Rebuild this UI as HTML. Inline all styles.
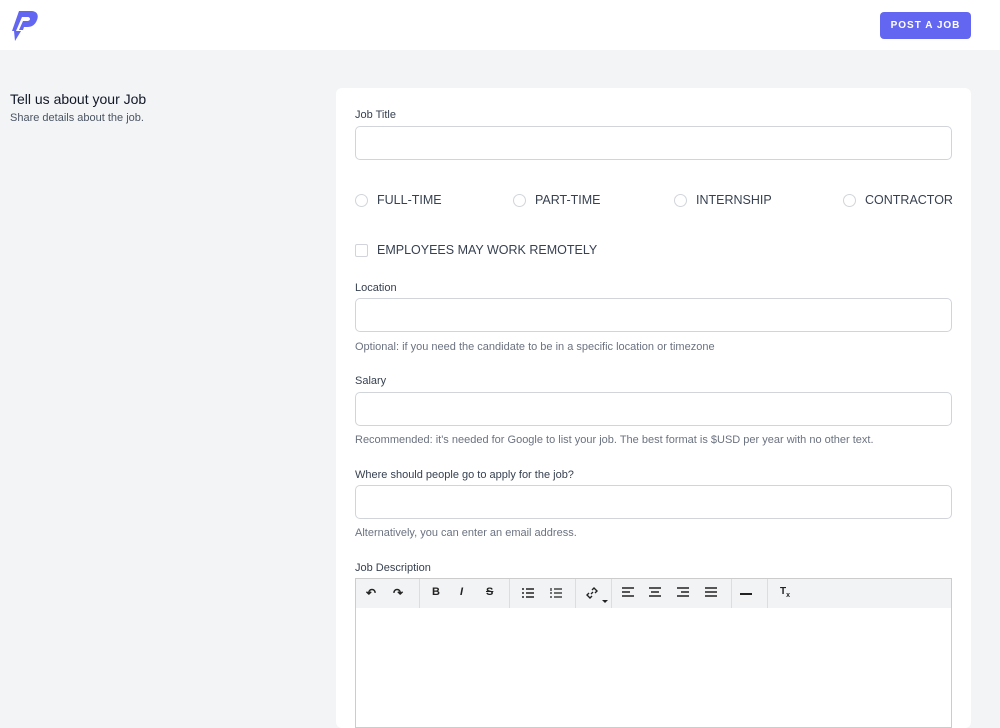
<!DOCTYPE html><html><head><style>
*{box-sizing:border-box;margin:0;padding:0}
body{width:1000px;height:717px;overflow:hidden;background:#f3f4f6;font-family:"Liberation Sans",sans-serif;color:#374151;position:relative}
.hdr{position:absolute;left:0;top:0;width:1000px;height:50px;background:#fff}
.btn{position:absolute;left:880px;top:12px;width:91px;height:27px;background:#6366f1;border-radius:4px;color:#fff;font-size:10px;font-weight:bold;letter-spacing:1px;text-align:center;line-height:27px}
.card{position:absolute;left:336px;top:88px;width:635px;height:640px;background:#fff;border-radius:6px}
.a{position:absolute;font-size:11px;color:#374151}
.in{position:absolute;left:355px;width:597px;height:34px;border:1px solid #d1d5db;border-radius:5px;background:#fff}
.help{position:absolute;left:355px;font-size:11px;color:#6b7280}
.r{position:absolute;font-size:12.5px;color:#374151}
.r i{position:absolute;left:0;top:1px;width:13px;height:13px;border:1px solid #d1d5db;border-radius:50%}
.tb{position:absolute;left:355px;top:578px;width:597px;height:31px;background:#f1f3f4;border:1px solid #ccc}
.ed{position:absolute;left:355px;top:608px;width:597px;height:120px;border:1px solid #ccc;border-top:none;background:#fff}
.sep{position:absolute;top:0;width:1px;height:29px;background:#ddd}
.ic{position:absolute;top:7px;font-size:12px;color:#222;font-weight:bold}
svg.s{position:absolute;top:8px}
</style></head><body>
<div class="hdr">
<svg style="position:absolute;left:12px;top:10px" width="27" height="32" viewBox="0 0 27 32"><path d="M7 1h12c6 0 8 4 6 9s-5 7-10 7h-3l-1 3h-4l4-9h4c2 0 3-1 3-2s-1-2-2-2h-6l-6 14H0z" fill="#6366f1"/><path d="M2 21h7l-6 10z" fill="#6366f1"/></svg>
<div class="btn">POST A JOB</div></div>
<div style="position:absolute;left:10px;top:91px;font-size:14px;color:#111827">Tell us about your Job</div>
<div style="position:absolute;left:10px;top:112px;font-size:11px;color:#4b5563">Share details about the job.</div>
<div class="card"></div>
<div class="a" style="left:355px;top:109px">Job Title</div>
<div class="in" style="top:126px"></div>
<div class="r" style="left:355px;top:193px"><i></i><span style="margin-left:22px">FULL-TIME</span></div>
<div class="r" style="left:513px;top:193px"><i></i><span style="margin-left:22px">PART-TIME</span></div>
<div class="r" style="left:674px;top:193px"><i></i><span style="margin-left:22px">INTERNSHIP</span></div>
<div class="r" style="left:843px;top:193px"><i></i><span style="margin-left:22px">CONTRACTOR</span></div>
<div class="r" style="left:355px;top:243px"><i style="border-radius:2px"></i><span style="margin-left:22px">EMPLOYEES MAY WORK REMOTELY</span></div>
<div class="a" style="left:355px;top:282px">Location</div>
<div class="in" style="top:298px"></div>
<div class="help" style="top:341px">Optional: if you need the candidate to be in a specific location or timezone</div>
<div class="a" style="left:355px;top:375px">Salary</div>
<div class="in" style="top:392px"></div>
<div class="help" style="top:434px">Recommended: it's needed for Google to list your job. The best format is $USD per year with no other text.</div>
<div class="a" style="left:355px;top:469px">Where should people go to apply for the job?</div>
<div class="in" style="top:485px"></div>
<div class="help" style="top:527px">Alternatively, you can enter an email address.</div>
<div class="a" style="left:355px;top:562px">Job Description</div>
<div class="tb">
<div class="sep" style="left:63px"></div><div class="sep" style="left:153px"></div><div class="sep" style="left:219px"></div><div class="sep" style="left:255px"></div><div class="sep" style="left:375px"></div><div class="sep" style="left:411px"></div>
<div class="ic" style="left:10px">↶</div><div class="ic" style="left:37px">↷</div>
<div class="ic" style="left:76px;font-size:11px">B</div><div class="ic" style="left:104px;font-style:italic;font-size:11px">I</div><div class="ic" style="left:130px;text-decoration:line-through;font-size:11px">S</div>
<svg class="s" style="left:166px" width="12" height="12" viewBox="0 0 12 12" stroke="#222" stroke-width="1.5"><path d="M0 2h2M0 6h2M0 10h2M4 2h8M4 6h8M4 10h8"/></svg>
<svg class="s" style="left:194px" width="12" height="12" viewBox="0 0 12 12" stroke="#222" stroke-width="1.2"><path d="M1 1v3M0 6h2M0 10h2M4 2h8M4 6h8M4 10h8"/></svg>
<svg class="s" style="left:230px" width="12" height="12" viewBox="0 0 12 12" stroke="#222" stroke-width="1.4" fill="none"><path d="M5 7l2-2M6 3l2-2 3 3-2 2M6 9l-2 2-3-3 2-2"/></svg>
<div style="position:absolute;left:246px;top:21px;border:3px solid transparent;border-top:3px solid #222"></div>
<svg class="s" style="left:266px" width="12" height="10" viewBox="0 0 12 10" stroke="#222" stroke-width="1.6"><path d="M0 1h12M0 5h8M0 9h12"/></svg>
<svg class="s" style="left:293px" width="12" height="10" viewBox="0 0 12 10" stroke="#222" stroke-width="1.6"><path d="M0 1h12M2 5h8M0 9h12"/></svg>
<svg class="s" style="left:321px" width="12" height="10" viewBox="0 0 12 10" stroke="#222" stroke-width="1.6"><path d="M0 1h12M4 5h8M0 9h12"/></svg>
<svg class="s" style="left:349px" width="12" height="10" viewBox="0 0 12 10" stroke="#222" stroke-width="1.6"><path d="M0 1h12M0 5h12M0 9h12"/></svg>
<div style="position:absolute;left:384px;top:14px;width:12px;height:2px;background:#222"></div>
<div class="ic" style="left:424px;font-size:10px">T<sub style="font-size:7px">x</sub></div>
</div>
<div class="ed"></div>
</body></html>
